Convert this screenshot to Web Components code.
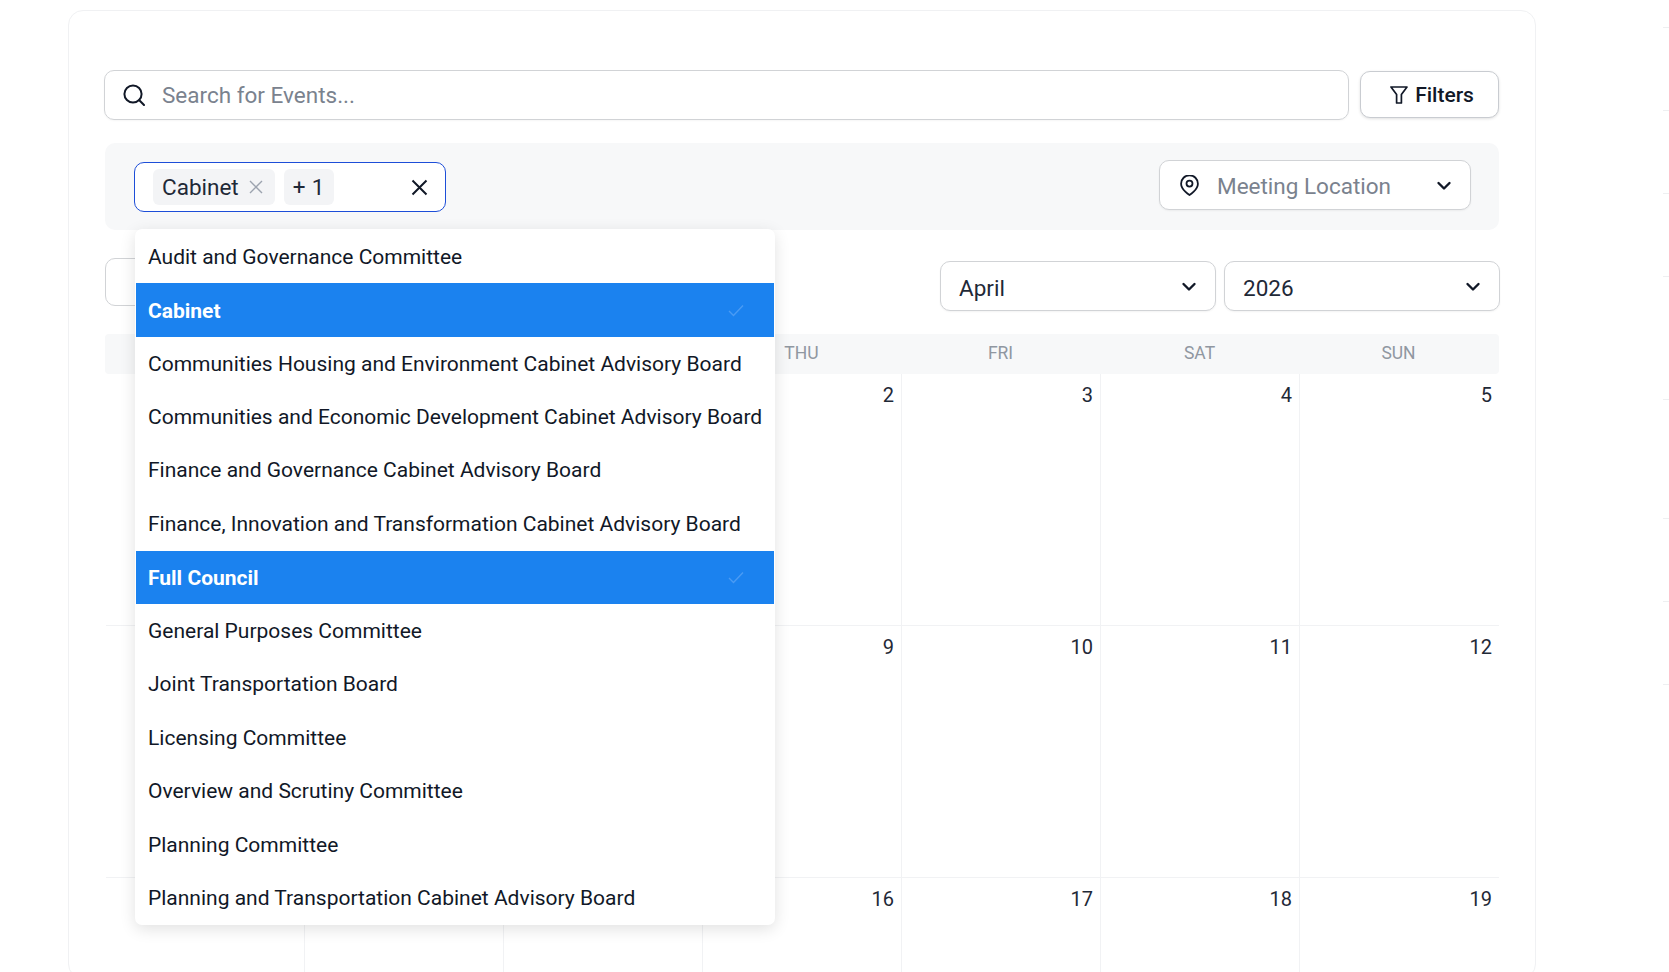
<!DOCTYPE html>
<html lang="en">
<head>
<meta charset="utf-8">
<title>Events</title>
<style>
  html, body { margin: 0; height: 100%; overflow: hidden; background: #fff; }
  body { font-family: Roboto, "Liberation Sans", sans-serif; color: #111827; }
</style>
</head>
<body>
<app-shell>
  <event-card>
    <search-bar placeholder="Search for Events..."></search-bar>
    <filter-panel>
      <multi-select slot="left"></multi-select>
      <location-select slot="right">Meeting Location</location-select>
    </filter-panel>
    <cal-toolbar>
      <select-box>April</select-box>
      <select-box>2026</select-box>
    </cal-toolbar>
    <cal-grid year="2026" month="3"></cal-grid>
  </event-card>
  <side-rail></side-rail>
</app-shell>

<script>
const chevron = `<svg width="16" height="10" viewBox="0 0 16 10" fill="none" stroke="#111827" stroke-width="2.4" stroke-linecap="round" stroke-linejoin="round"><path d="M2.5 2 8 7.5 13.5 2"/></svg>`;

customElements.define("app-shell", class extends HTMLElement {
  connectedCallback() {
    this.attachShadow({mode: "open"});
    this.shadowRoot.innerHTML = `
    <style>
      :host { display: flex; justify-content: space-between; align-items: flex-start; padding: 10px 0 0 68px; }
    </style>
    <slot></slot>`;
  }
});

customElements.define("event-card", class extends HTMLElement {
  connectedCallback() {
    this.attachShadow({mode: "open"});
    this.shadowRoot.innerHTML = `
    <style>
      :host {
        display: block; width: 1394px; padding: 59px 36px 0;
        border: 1px solid #f0f1f3; border-radius: 15px; background: #fff;
      }
    </style>
    <slot></slot>`;
  }
});

customElements.define("search-bar", class extends HTMLElement {
  connectedCallback() {
    this.attachShadow({mode: "open"});
    const text = this.getAttribute("placeholder");
    this.shadowRoot.innerHTML = `
    <style>
      :host { display: flex; gap: 11px; align-items: flex-start; margin-left: -1px; }
      .search {
        flex: 1; height: 50px; box-sizing: border-box; display: flex; align-items: center; gap: 17px;
        padding-left: 18px; border: 1px solid #d1d3d6; border-radius: 10px;
        box-shadow: 0 1px 2px rgba(0,0,0,.04);
        font-size: 22.5px; color: #7a828e;
      }
      button {
        width: 139px; height: 47px; margin-top: 1px; box-sizing: border-box;
        display: flex; align-items: center; justify-content: center; gap: 7px; padding: 0 0 0 5px;
        border: 1px solid #c9ccd1; border-radius: 10px; background: #fff;
        box-shadow: 0 1px 3px rgba(0,0,0,.12);
        font: 500 21px Roboto, sans-serif; color: #111827;
      }
      svg { display: block; flex: none; }
    </style>
    <div class="search">
      <svg width="22" height="22" viewBox="0 0 22 22" fill="none" stroke="#111827" stroke-width="2" stroke-linecap="round"><circle cx="10" cy="10" r="8.6"/><path d="M16.3 16.3 21 21"/></svg>
      <span>${text}</span>
    </div>
    <button>
      <svg width="18" height="18" viewBox="0 0 18 18" fill="none" stroke="#111827" stroke-width="1.7" stroke-linejoin="round"><path d="M1 1h16l-5.6 7.6V17H6.6V8.6L1 1z"/></svg>
      Filters
    </button>`;
  }
});

customElements.define("filter-panel", class extends HTMLElement {
  connectedCallback() {
    this.attachShadow({mode: "open"});
    this.shadowRoot.innerHTML = `
    <style>
      :host {
        display: flex; justify-content: space-between; align-items: flex-start;
        height: 87px; box-sizing: border-box; margin-top: 23px; padding: 17px 28px 0 29px;
        background: #f7f8f9; border-radius: 10px;
      }
    </style>
    <slot name="left"></slot>
    <slot name="right"></slot>`;
  }
});

const committees = [
  "Audit and Governance Committee",
  "Cabinet",
  "Communities Housing and Environment Cabinet Advisory Board",
  "Communities and Economic Development Cabinet Advisory Board",
  "Finance and Governance Cabinet Advisory Board",
  "Finance, Innovation and Transformation Cabinet Advisory Board",
  "Full Council",
  "General Purposes Committee",
  "Joint Transportation Board",
  "Licensing Committee",
  "Overview and Scrutiny Committee",
  "Planning Committee",
  "Planning and Transportation Cabinet Advisory Board"
];
const selected = ["Cabinet", "Full Council"];

customElements.define("multi-select", class extends HTMLElement {
  connectedCallback() {
    this.attachShadow({mode: "open"});
    const rows = committees.map(name => {
      const on = selected.includes(name);
      return `<li class="${on ? "on" : ""}"><span>${name}</span>${on ? `<svg width="16" height="13" viewBox="0 0 16 13" fill="none" stroke="#4a9bf4" stroke-width="1.4"><path d="M1 7l4.5 4.5L15 1.5"/></svg>` : ""}</li>`;
    }).join("");
    this.shadowRoot.innerHTML = `
    <style>
      :host { display: block; position: relative; z-index: 2; margin-top: 2px; }
      .box {
        width: 312px; height: 50px; box-sizing: border-box; display: flex; align-items: center; gap: 9px;
        padding: 0 17px 0 18px; border: 1.5px solid #1d4ed8; border-radius: 10px; background: #fff;
        font-size: 22.5px; color: #1f2937;
      }
      .chip {
        height: 36px; display: flex; align-items: center; gap: 10px; padding: 0 12px 0 9px;
        background: #f3f4f6; border-radius: 6px;
      }
      .more { padding: 0 9px; letter-spacing: .3px; }
      .clear { margin-left: auto; display: block; }
      ul {
        position: absolute; left: 1px; top: 67px; width: 640px; box-sizing: border-box; margin: 0; padding: 1px 1px 0;
        list-style: none; background: #fff; border-radius: 7px;
        box-shadow: 0 4px 16px rgba(0,0,0,.12);
        font-size: 21px; color: #111827;
      }
      li { height: 53.45px; display: flex; align-items: center; justify-content: space-between; padding: 0 12px; box-sizing: border-box; white-space: nowrap; }
      li.on { background: #1b82ef; color: #fff; font-weight: 700; padding: 1px 30px 0 12px; }
    </style>
    <div class="box">
      <span class="chip">Cabinet
        <svg width="14" height="14" viewBox="0 0 14 14" stroke="#9ca3af" stroke-width="1.4"><path d="M1 1l12 12M13 1 1 13"/></svg>
      </span>
      <span class="chip more">+ 1</span>
      <svg class="clear" width="17" height="17" viewBox="0 0 17 17" stroke="#111827" stroke-width="2"><path d="M1.5 1.5l14 14M15.5 1.5l-14 14"/></svg>
    </div>
    <ul>${rows}</ul>`;
  }
});

customElements.define("location-select", class extends HTMLElement {
  connectedCallback() {
    this.attachShadow({mode: "open"});
    this.shadowRoot.innerHTML = `
    <style>
      :host {
        display: flex; align-items: center; gap: 18px; width: 312px; height: 50px; box-sizing: border-box;
        padding: 2px 18px 0 20px; border: 1px solid #d1d3d6; border-radius: 10px; background: #fff;
        box-shadow: 0 1px 2px rgba(0,0,0,.05);
        font-size: 22.5px; color: #7a828e;
      }
      .pin { display: block; margin-top: -2px; }
      .arrow { margin-left: auto; display: flex; }
    </style>
    <svg class="pin" width="19" height="21" viewBox="0 0 19 21" fill="none" stroke="#111827" stroke-width="1.8"><path d="M9.5 20s8.4-5.2 8.4-11.3A8.4 8.4 0 0 0 1.1 8.7C1.1 14.8 9.5 20 9.5 20z"/><circle cx="9.5" cy="8.6" r="3"/></svg>
    <slot></slot>
    <span class="arrow">${chevron}</span>`;
  }
});

customElements.define("select-box", class extends HTMLElement {
  connectedCallback() {
    this.attachShadow({mode: "open"});
    this.shadowRoot.innerHTML = `
    <style>
      :host {
        display: flex; align-items: center; justify-content: space-between; width: 276px; height: 50px; box-sizing: border-box;
        padding: 3px 18px 0 18px; border: 1px solid #d1d3d6; border-radius: 10px; background: #fff;
        box-shadow: 0 1px 2px rgba(0,0,0,.05);
        font-size: 22.5px; color: #1f2937;
      }
      .arrow { display: flex; margin-top: -2px; }
    </style>
    <slot></slot>
    <span class="arrow">${chevron}</span>`;
  }
});

customElements.define("cal-toolbar", class extends HTMLElement {
  connectedCallback() {
    this.attachShadow({mode: "open"});
    this.shadowRoot.innerHTML = `
    <style>
      :host { display: flex; align-items: flex-start; margin: 28px -1px 0 0; height: 53px; gap: 8px; }
      .nav {
        width: 120px; height: 48px; box-sizing: border-box; margin-right: auto;
        border: 1px solid #d1d3d6; border-radius: 10px;
      }
      .selects { display: flex; gap: 8px; margin-top: 3px; }
    </style>
    <div class="nav"></div>
    <div class="selects"><slot></slot></div>`;
  }
});

// the open dropdown covers the first three columns, those stay without text
const coveredCols = 3;

customElements.define("cal-grid", class extends HTMLElement {
  connectedCallback() {
    this.attachShadow({mode: "open"});
    const year = +this.getAttribute("year");
    const month = +this.getAttribute("month");
    const start = new Date(year, month, 1);
    start.setDate(1 - (start.getDay() + 6) % 7);
    let cells = "";
    for (let i = 0; i < 21; i++) {
      const d = new Date(start.getFullYear(), start.getMonth(), start.getDate() + i);
      cells += `<div class="cell">${i % 7 < coveredCols ? "" : d.getDate()}</div>`;
    }
    const heads = ["", "", "", "THU", "FRI", "SAT", "SUN"].map(h => `<div>${h}</div>`).join("");
    this.shadowRoot.innerHTML = `
    <style>
      :host { display: block; margin-top: 23px; }
      .head, .body { display: grid; grid-template-columns: repeat(7, 199px); }
      .head {
        height: 40px; align-items: center; text-align: center; box-sizing: border-box; padding-bottom: 2px; border-radius: 4px;
        background: #f7f8f9; font-size: 17.5px; color: #9097a1;
      }
      .body { grid-template-rows: 252px 252px 100px; margin-left: 1px; }
      .cell {
        box-sizing: border-box; padding: 9px 7px 0 0; text-align: right;
        border-right: 1px solid #f1f2f4; border-bottom: 1px solid #f1f2f4;
        font-size: 20px; line-height: 24px; color: #1f2937;
      }
      .cell:nth-child(7n) { border-right: 0; }
      .cell:nth-last-child(-n+7) { border-bottom: 0; }
    </style>
    <div class="head">${heads}</div>
    <div class="body">${cells}</div>`;
  }
});

// only the left edge of this column is on screen
customElements.define("side-rail", class extends HTMLElement {
  connectedCallback() {
    this.attachShadow({mode: "open"});
    const rows = [83, 83, 83, 123, 119, 83, 83, 83].map(h => `<div style="height:${h - 1}px"></div>`).join("");
    this.shadowRoot.innerHTML = `
    <style>
      :host { display: block; width: 6px; margin-top: 17px; }
      div { border-top: 1px solid #eeeff1; }
    </style>
    ${rows}`;
  }
});
</script>
</body>
</html>
